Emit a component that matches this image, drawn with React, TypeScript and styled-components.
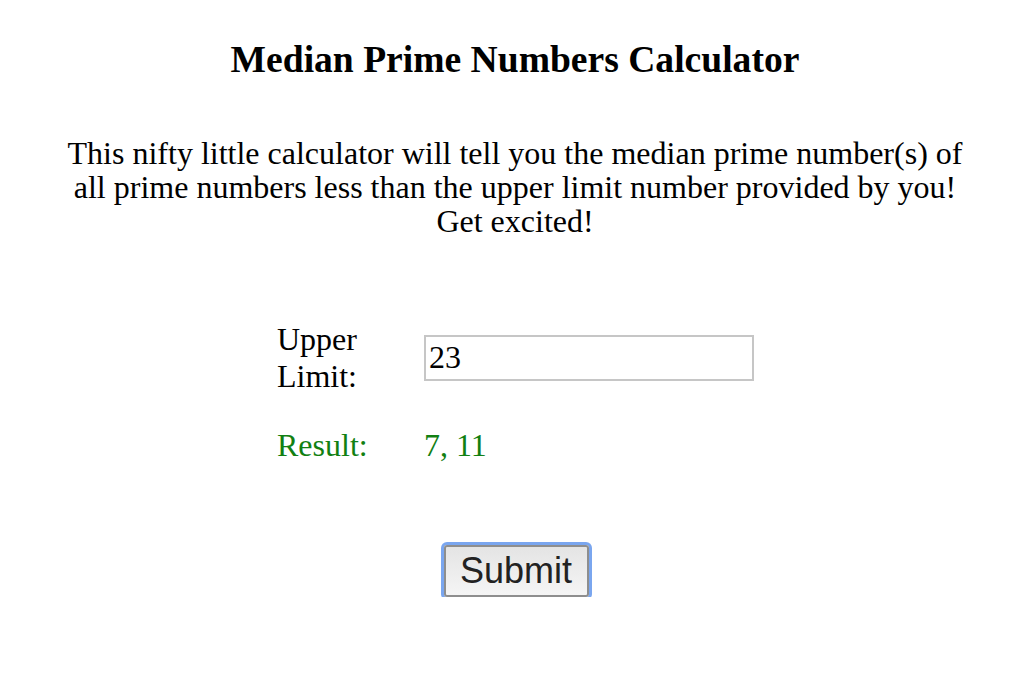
import React from "react";
import styled, { createGlobalStyle } from "styled-components";

const GlobalStyle = createGlobalStyle`
  html, body {
    margin: 0;
    padding: 0;
    background: #ffffff;
  }
  body {
    font-family: "Liberation Serif", "Times New Roman", serif;
    color: #000000;
  }
`;

const Page = styled.main`
  padding: 0 16px;
  font-size: 32px;
`;

const Title = styled.h3`
  margin: 38px 0 0;
  font-size: 37.6px;
  line-height: 43px;
  font-weight: bold;
  text-align: center;
`;

const Intro = styled.p`
  max-width: 912px;
  margin: 55px auto 0;
  line-height: 34px;
  text-align: center;
`;

const FormGrid = styled.div`
  display: grid;
  grid-template-columns: 147px 329px;
  row-gap: 32px;
  justify-content: center;
  align-items: center;
  margin-top: 83px;
`;

const Label = styled.div<{ $tone?: "plain" | "success" }>`
  line-height: 36.8px;
  color: ${(p) => (p.$tone === "success" ? "#128012" : "#000000")};
`;

const NumberInput = styled.input`
  box-sizing: border-box;
  width: 330px;
  height: 46px;
  margin: 0;
  padding: 0 3px;
  border: 2px solid #c6c6c6;
  font-family: "Liberation Serif", "Times New Roman", serif;
  font-size: 32px;
  color: #000000;
  background: #ffffff;
  outline: none;
`;

const Actions = styled.div`
  display: flex;
  justify-content: center;
  margin-top: 82px;
`;

const SubmitButton = styled.button`
  box-sizing: border-box;
  width: 145px;
  height: 52px;
  padding: 0 14px;
  margin: 0;
  border: 2px solid #8e8e8e;
  border-radius: 3px;
  background: linear-gradient(#e4e4e4, #f5f5f5);
  box-shadow: 0 0 0 3px #7aa6ef;
  font-family: "Liberation Sans", Arial, sans-serif;
  font-size: 36px;
  line-height: 1;
  color: #222222;
  cursor: pointer;
  transform: translateX(1px);
`;

export default function App() {
  return (
    <>
      <GlobalStyle />
      <Page>
        <Title>Median Prime Numbers Calculator</Title>
        <Intro>
          This nifty little calculator will tell you the median prime number(s) of all prime
          numbers less than the upper limit number provided by you! Get excited!
        </Intro>
        <FormGrid>
          <Label>Upper Limit:</Label>
          <NumberInput type="text" defaultValue="23" />
          <Label $tone="success">Result:</Label>
          <Label $tone="success">7, 11</Label>
        </FormGrid>
        <Actions>
          <SubmitButton type="button">Submit</SubmitButton>
        </Actions>
      </Page>
    </>
  );
}
